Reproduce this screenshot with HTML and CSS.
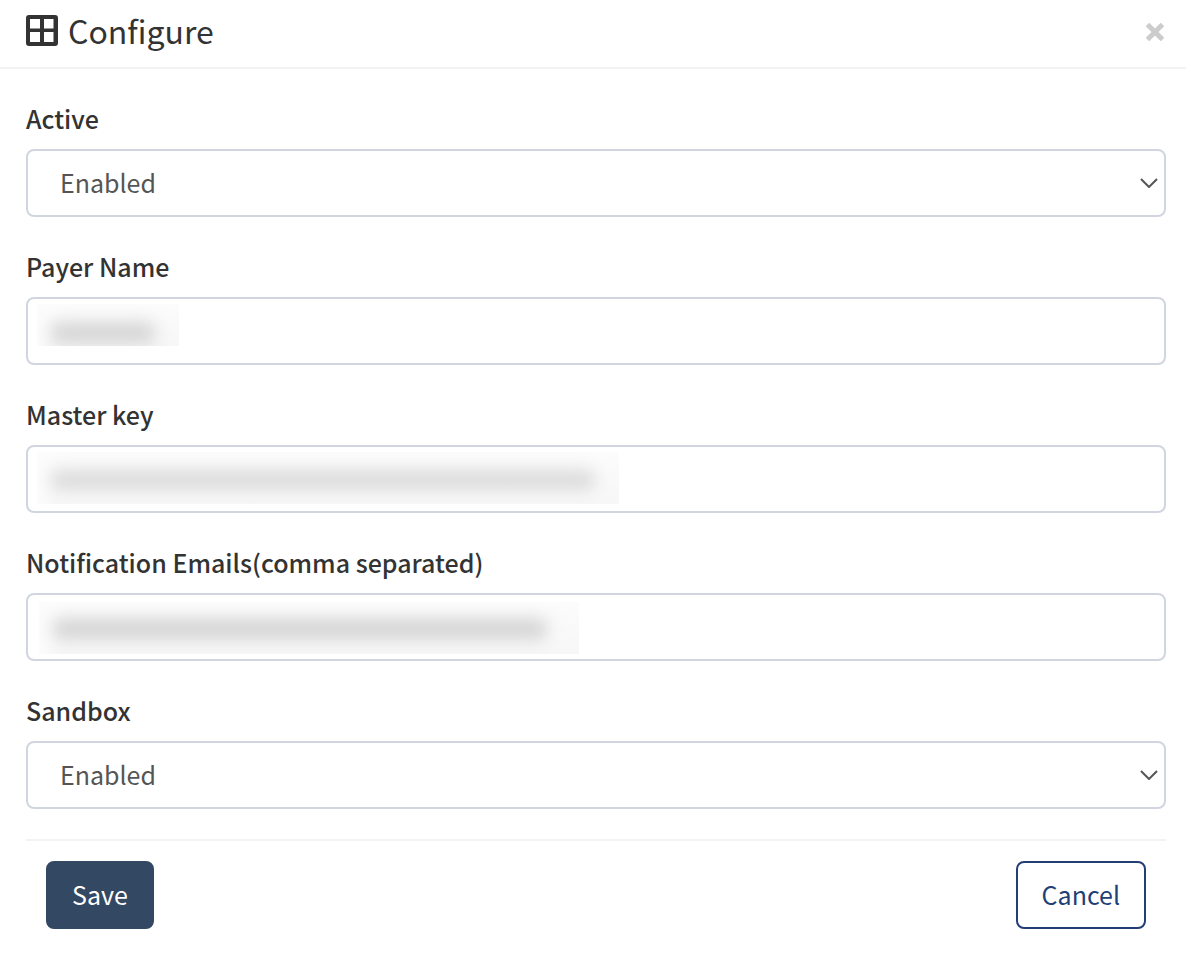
FILE: index.html
```html
<!DOCTYPE html>
<html lang="en">
<head>
<meta charset="utf-8">
<meta name="viewport" content="width=device-width, initial-scale=1">
<title>Configure</title>
<link rel="stylesheet" href="styles.css">
</head>
<body>
<main class="dialog">
  <header class="dialog-header">
    <svg class="title-icon" viewBox="0 0 32 32" aria-hidden="true"><path fill-rule="evenodd" d="M3 0H29Q32 0 32 3V28Q32 31 29 31H3Q0 31 0 28V3Q0 0 3 0ZM4 4V13.500H14V4ZM18 4V13.500H27.500V4ZM4 17V27H14V17ZM18 17V27H27.500V17Z"/></svg>
    <h1 class="title">Configure</h1>
    <button class="close" type="button" aria-label="Close">
      <svg class="close-icon" viewBox="0 0 20 20" aria-hidden="true"><path d="M2.500 3.500L17.500 18.500M17.500 3.500L2.500 18.500"/></svg>
    </button>
  </header>
  <form class="form">
    <div class="field">
      <label class="label" for="active">Active</label>
      <div class="control">
        <select class="input select" id="active"><option>Enabled</option><option>Disabled</option></select>
        <svg class="chevron" viewBox="0 0 18 10" aria-hidden="true"><path d="M1 1L9 9L17 1"/></svg>
      </div>
    </div>
    <div class="field">
      <label class="label" for="payer">Payer Name</label>
      <div class="control">
        <input class="input" id="payer" type="text">
        <span class="mask mask-payer"></span>
      </div>
    </div>
    <div class="field">
      <label class="label" for="key">Master key</label>
      <div class="control">
        <input class="input" id="key" type="text">
        <span class="mask mask-key"></span>
      </div>
    </div>
    <div class="field">
      <label class="label" for="emails">Notification Emails(comma separated)</label>
      <div class="control">
        <input class="input" id="emails" type="text">
        <span class="mask mask-emails"></span>
      </div>
    </div>
    <div class="field">
      <label class="label" for="sandbox">Sandbox</label>
      <div class="control">
        <select class="input select" id="sandbox"><option>Enabled</option><option>Disabled</option></select>
        <svg class="chevron" viewBox="0 0 18 10" aria-hidden="true"><path d="M1 1L9 9L17 1"/></svg>
      </div>
    </div>
    <footer class="actions">
      <button class="button button-primary" type="submit">Save</button>
      <button class="button button-outline" type="button">Cancel</button>
    </footer>
  </form>
</main>
</body>
</html>
```
FILE: styles.css
```css
* { box-sizing: border-box; }

body {
  margin: 0;
  background: #fff;
  color: #333;
  font-family: "Noto Sans CJK SC", "Noto Sans", sans-serif;
}

.dialog-header {
  display: flex;
  align-items: center;
  gap: 10px;
  padding: 0 20px 6px 26px;
  border-bottom: 2px solid #f3f3f3;
}

.title-icon {
  width: 32px;
  height: 32px;
  fill: #333;
}

.title {
  flex: 1;
  margin: 0;
  font-size: 32px;
  font-weight: 400;
  line-height: 61px;
}

.close {
  display: flex;
  padding: 1px;
  border: 0;
  background: none;
}

.close-icon {
  width: 20px;
  height: 20px;
  fill: none;
  stroke: #ccc;
  stroke-width: 5;
}

.form {
  padding: 30px 20px 20px 26px;
}

.field {
  display: flex;
  flex-direction: column;
  gap: 12px;
  margin-bottom: 30px;
}

.label {
  font-size: 25px;
  font-weight: 500;
  line-height: 38px;
}

.control { position: relative; }

.input {
  display: block;
  width: 100%;
  height: 68px;
  padding: 0 24px 2px;
  border: 2px solid #d1d5e0;
  border-radius: 8px;
  background: #fff;
  color: #555;
  font-family: inherit;
  font-size: 25px;
}

.select {
  appearance: none;
  padding: 0 32px 2px;
}

.chevron {
  position: absolute;
  right: 8px;
  top: 29px;
  width: 18px;
  height: 10px;
  fill: none;
  stroke: #555;
  stroke-width: 2;
  pointer-events: none;
}

.mask {
  position: absolute;
  top: 7px;
  left: 11px;
  height: 52px;
  overflow: hidden;
  background: linear-gradient(to right, #fcfcfc, #f7f7f7 20px);
  pointer-events: none;
}

.mask::before {
  content: "";
  position: absolute;
  inset: 0;
  background: linear-gradient(#fcfcfc, transparent);
}

.mask::after {
  content: "";
  position: absolute;
  top: 18px;
  bottom: 14px;
  left: 14px;
  right: 24px;
  border-radius: 8px;
  background: #dbdbdb;
  filter: blur(8px);
}

.mask-payer {
  width: 142px;
  height: 42px;
}

.mask-payer::after {
  bottom: 2px;
  background: #d6d6d6;
}

.mask-key { width: 582px; }

.mask-emails {
  top: 9px;
  left: 13px;
  width: 540px;
}

.mask-emails::after {
  top: 16px;
  right: 32px;
  background: #d6d6d6;
}

.actions {
  display: flex;
  justify-content: space-between;
  padding: 20px;
  border-top: 2px solid #f3f3f3;
}

.button {
  height: 68px;
  padding: 0 24px 2px;
  border: 2px solid;
  border-radius: 8px;
  font-family: inherit;
  font-size: 25px;
}

.button-primary {
  border-color: #324863;
  background: #324863;
  color: #fff;
}

.button-outline {
  border-color: #223f75;
  background: #fff;
  color: #223f75;
}
```
